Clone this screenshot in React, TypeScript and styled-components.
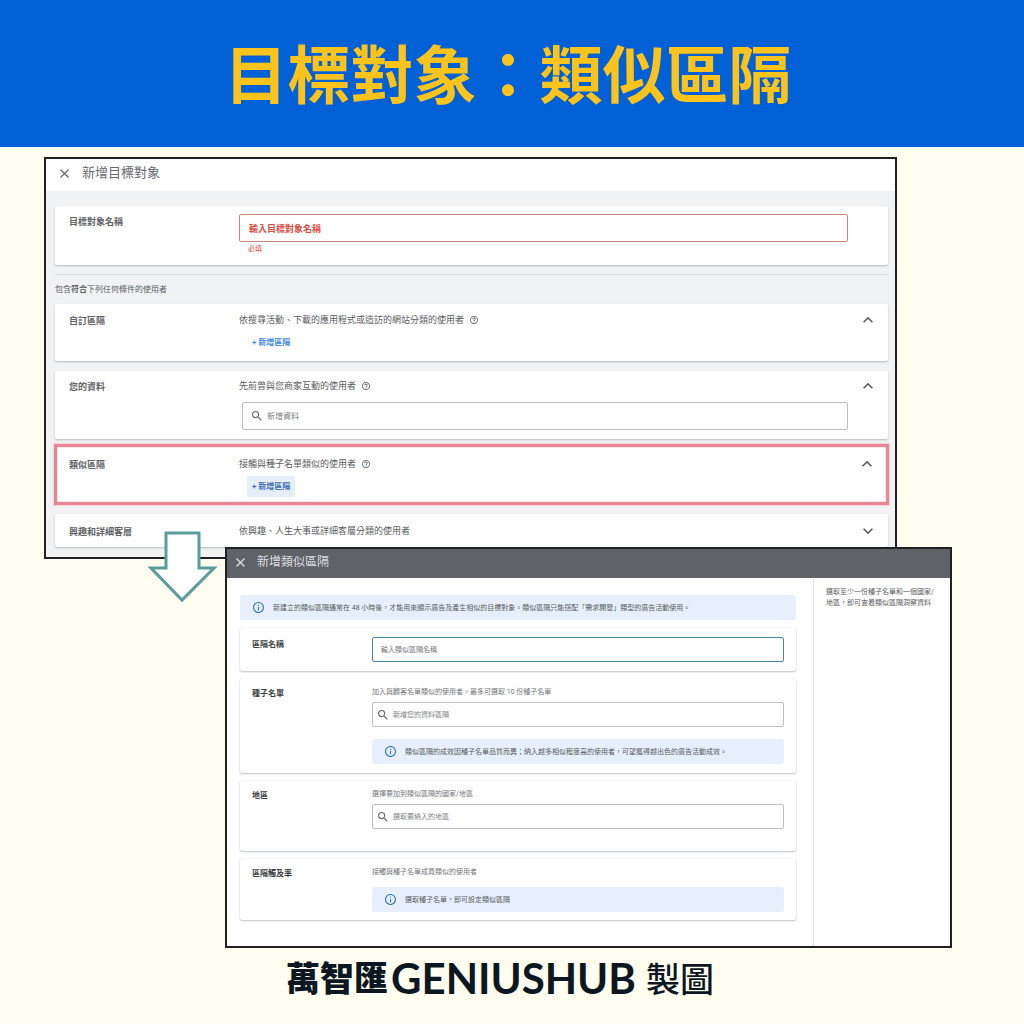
import React from "react";
import styled, { createGlobalStyle, css } from "styled-components";

const GlobalStyle = createGlobalStyle`
  *, *::before, *::after { box-sizing: border-box; }
  body {
    margin: 0;
    background: #fffdf0;
    color: #5a5d61;
    font-family: Roboto, "Noto Sans CJK TC", sans-serif;
  }
  h1, h2, h3, p { margin: 0; }
  button, input { font-family: inherit; }
`;

const Page = styled.main`
  display: flex;
  flex-direction: column;
`;

const Banner = styled.header`
  display: flex;
  justify-content: center;
  padding: 33px 8px 39px 0;
  margin-bottom: 10px;
  background: #0060d6;
`;

const BannerTitle = styled.h1`
  font-family: "Noto Sans CJK TC", sans-serif;
  font-size: 63px;
  line-height: 75px;
  font-weight: 700;
  color: #fbc31c;
`;

const Stage = styled.div`
  position: relative;
  display: flex;
  flex-direction: column;
`;

const Panel = styled.section`
  border: 2px solid #1f2224;
  background: #fff;
`;

const AudiencePanel = styled(Panel)`
  margin: 0 127px 0 44px;
`;

const SegmentPanel = styled(Panel)`
  position: relative;
  margin: -12px 72px 0 225px;
`;

const TitleBar = styled.div<{ $dark?: boolean }>`
  display: flex;
  align-items: center;
  gap: 13px;
  height: 32px;
  padding: 0 14px 4px;
  color: #66696d;
  ${(p) =>
    p.$dark &&
    css`
      gap: 12px;
      height: 29px;
      padding: 0 9px 3px;
      background: #5f6267;
      color: #dddee0;
    `}
`;

const PanelTitle = styled.h2<{ $size: number }>`
  font-size: ${(p) => p.$size}px;
  line-height: 20px;
  font-weight: 400;
`;

const IconButton = styled.button`
  display: flex;
  align-items: center;
  justify-content: center;
  height: 14px;
  padding: 0;
  border: 0;
  background: none;
  color: inherit;
`;

const AudienceBody = styled.div`
  display: flex;
  flex-direction: column;
  padding: 15px 7px 10px 9px;
  background: #f0f2f4;
`;

const Divider = styled.hr`
  width: 100%;
  height: 1px;
  margin: 9px 0 8px;
  border: 0;
  background: #dcdfe1;
`;

const Condition = styled.p`
  margin-bottom: 7px;
  font-size: 8px;
  line-height: 14px;
`;

const CardList = styled.div`
  display: flex;
  flex-direction: column;
  gap: 10px;
`;

const Card = styled.div<{ $top: number; $bottom: number; $highlight?: boolean }>`
  display: grid;
  grid-template-columns: 170px 1fr 40px;
  align-items: start;
  padding: ${(p) => p.$top}px 0 ${(p) => p.$bottom}px 14px;
  border-radius: 2px;
  background: #fff;
  box-shadow: 0 1px 2px rgba(60, 64, 67, 0.32);
  ${(p) =>
    p.$highlight &&
    css`
      margin: -5px -1px -1px;
      padding-left: 12px;
      grid-template-columns: 170px 1fr 38px;
      border: 3px solid #e58796;
      border-radius: 0;
      box-shadow: 0 0 0 1px #f7d3d8, inset 0 0 0 1px #fbe4e7;
    `}
`;

const SegmentCard = styled(Card)`
  grid-template-columns: 120px 1fr;
  padding-left: 12px;
  padding-right: 12px;
  box-shadow: 0 1px 2px rgba(60, 64, 67, 0.3), 0 0 1px rgba(60, 64, 67, 0.2);
`;

const labelText = css<{ $small?: boolean }>`
  padding-top: 1px;
  font-size: ${(p) => (p.$small ? 8 : 9)}px;
  line-height: 14px;
  font-weight: 700;
  color: ${(p) => (p.$small ? "#3c3f43" : "#5f6266")};
`;

const Label = styled.label<{ $small?: boolean }>`
  ${labelText}
`;

const CardHeading = styled.h3<{ $small?: boolean }>`
  ${labelText}
`;

const Field = styled.div`
  display: flex;
  flex-direction: column;
  align-items: stretch;
  min-width: 0;
`;

const Summary = styled.p`
  display: flex;
  align-items: center;
  gap: 6px;
  font-size: 9px;
  line-height: 14px;
`;

const Description = styled.p`
  font-size: 7px;
  line-height: 12px;
  color: #74777b;
`;

const ErrorText = styled.p`
  margin-top: 1px;
  padding-left: 9px;
  font-size: 7px;
  line-height: 12px;
  color: #d5453c;
`;

const NameInput = styled.input`
  width: 100%;
  height: 28px;
  padding: 2px 9px 0;
  border: 1px solid #d4827c;
  border-radius: 2px;
  outline: 0;
  background: #fff;
  font-size: 9px;
  font-weight: 700;
  &::placeholder { color: #db4d44; opacity: 1; }
`;

const SegmentNameInput = styled(NameInput)`
  height: 25px;
  padding: 1px 8px 0;
  border-color: #4388b0;
  font-size: 7px;
  font-weight: 400;
  &::placeholder { color: #74777b; }
`;

const SearchBox = styled.div<{ $compact?: boolean }>`
  display: flex;
  align-items: center;
  gap: 5px;
  height: ${(p) => (p.$compact ? 25 : 28)}px;
  margin: ${(p) => (p.$compact ? "4px 0 0" : "9px 0 0 3px")};
  padding: 0 ${(p) => (p.$compact ? 5 : 9)}px;
  border: 1px solid #bfc1c4;
  border-radius: 2px;
  color: #66696d;
`;

const SearchInput = styled.input<{ $compact?: boolean }>`
  flex: 1;
  min-width: 0;
  padding: 0;
  border: 0;
  outline: 0;
  background: none;
  font-size: ${(p) => (p.$compact ? 7 : 8)}px;
  &::placeholder { color: #7c7f83; opacity: 1; }
`;

const AddButton = styled.button<{ $active?: boolean }>`
  align-self: flex-start;
  height: 21px;
  margin: 5px 0 0 8px;
  padding: 0 5px;
  border: 0;
  border-radius: 2px;
  background: ${(p) => (p.$active ? "#e6eefb" : "transparent")};
  color: ${(p) => (p.$active ? "#406fb8" : "#4189e4")};
  font-size: 8px;
  font-weight: 700;
  line-height: 14px;
`;

const SegmentBody = styled.div`
  display: grid;
  grid-template-columns: 1fr 137px;
`;

const SegmentMain = styled.div`
  display: flex;
  flex-direction: column;
  gap: 8px;
  padding: 17px 17px 26px 13px;
`;

const Notice = styled.div<{ $gap?: number }>`
  display: flex;
  align-items: center;
  gap: 9px;
  height: 25px;
  margin-top: ${(p) => p.$gap ?? 0}px;
  padding: 0 13px;
  border-radius: 3px;
  background: #e7effc;
  font-size: 7px;
  line-height: 12px;
  svg { color: #2f78b8; }
`;

const Sidebar = styled.aside`
  padding: 9px 12px;
  border-left: 1px solid #e3e5e7;
  font-size: 7px;
  line-height: 11px;
`;

const Arrow = styled.svg`
  position: absolute;
  left: 147px;
  top: 373px;
`;

const Credit = styled.footer`
  display: flex;
  justify-content: center;
  align-items: center;
  padding: 6px 24px 0 0;
  color: #0c1722;
  font-family: Lato, "Noto Sans CJK TC", sans-serif;
  font-size: 34px;
  line-height: 48px;
`;

const CreditBold = styled.strong`
  font-weight: 900;
`;

const CreditLatin = styled.strong`
  margin: 0 10px 0 3px;
  font-size: 42px;
  font-weight: 700;
`;

const CreditPlain = styled.span`
  font-family: "Noto Sans CJK TC Medium", "Noto Sans CJK TC", sans-serif;
  font-weight: 500;
`;

type IconProps = { size: number; box: string; d: string };

const Icon = ({ size, box, d }: IconProps) => (
  <svg width={size} height={size} viewBox={box} fill="currentColor" aria-hidden="true">
    <path d={d} />
  </svg>
);

const CloseIcon = () => (
  <Icon
    size={9}
    box="5 5 14 14"
    d="M19 6.41 17.59 5 12 10.59 6.41 5 5 6.41 10.59 12 5 17.59 6.41 19 12 13.41 17.59 19 19 17.59 13.41 12z"
  />
);

const HelpIcon = () => (
  <Icon
    size={8}
    box="2 2 20 20"
    d="M11 18h2v-2h-2v2zm1-16C6.48 2 2 6.48 2 12s4.480 10 10 10 10-4.480 10-10S17.520 2 12 2zm0 18c-4.410 0-8-3.590-8-8s3.590-8 8-8 8 3.590 8 8-3.590 8-8 8zm0-14c-2.210 0-4 1.790-4 4h2c0-1.100.9-2 2-2s2 .9 2 2c0 2-3 1.750-3 5h2c0-2.250 3-2.500 3-5 0-2.210-1.790-4-4-4z"
  />
);

const InfoIcon = () => (
  <Icon
    size={11}
    box="2 2 20 20"
    d="M11 7h2v2h-2zm0 4h2v6h-2zm1-9C6.480 2 2 6.480 2 12s4.480 10 10 10 10-4.480 10-10S17.520 2 12 2zm0 18c-4.410 0-8-3.590-8-8s3.590-8 8-8 8 3.590 8 8-3.590 8-8 8z"
  />
);

const SearchIcon = () => (
  <Icon
    size={10}
    box="3 3 18 18"
    d="M15.500 14h-.79l-.28-.27A6.471 6.471 0 0 0 16 9.500 6.500 6.500 0 1 0 9.500 16c1.610 0 3.090-.59 4.230-1.570l.27.28v.79l5 4.990L20.490 19l-4.990-5zm-6 0C7.010 14 5 11.990 5 9.500S7.010 5 9.500 5 14 7.010 14 9.500 11.990 14 9.500 14z"
  />
);

const UpIcon = () => (
  <Icon size={10} box="6 6 12 12" d="M12 8l-6 6 1.410 1.410L12 10.830l4.590 4.580L18 14z" />
);

const DownIcon = () => (
  <Icon size={10} box="6 6 12 12" d="M16.590 8.590 12 13.170 7.410 8.590 6 10l6 6 6-6z" />
);

const Toggle = ({ open = true }: { open?: boolean }) => (
  <IconButton type="button" aria-expanded={open} aria-label={open ? "收合" : "展開"}>
    {open ? <UpIcon /> : <DownIcon />}
  </IconButton>
);

type SearchProps = { id: string; placeholder: string; compact?: boolean };

const Search = ({ id, placeholder, compact }: SearchProps) => (
  <SearchBox $compact={compact}>
    <SearchIcon />
    <SearchInput id={id} type="text" placeholder={placeholder} $compact={compact} />
  </SearchBox>
);

const AudienceForm = () => (
  <AudiencePanel>
    <TitleBar>
      <IconButton type="button" aria-label="關閉">
        <CloseIcon />
      </IconButton>
      <PanelTitle $size={13}>新增目標對象</PanelTitle>
    </TitleBar>
    <AudienceBody>
      <Card $top={8} $bottom={10}>
        <Label htmlFor="audience-name">目標對象名稱</Label>
        <Field>
          <NameInput id="audience-name" type="text" placeholder="輸入目標對象名稱" />
          <ErrorText>必填</ErrorText>
        </Field>
      </Card>
      <Divider />
      <Condition>
        包含<b>符合</b>下列任何條件的使用者
      </Condition>
      <CardList>
        <Card $top={9} $bottom={8}>
          <CardHeading>自訂區隔</CardHeading>
          <Field>
            <Summary>
              依搜尋活動、下載的應用程式或造訪的網站分類的使用者 <HelpIcon />
            </Summary>
            <AddButton type="button">+ 新增區隔</AddButton>
          </Field>
          <Toggle />
        </Card>
        <Card $top={8} $bottom={9}>
          <Label htmlFor="your-data">您的資料</Label>
          <Field>
            <Summary>
              先前曾與您商家互動的使用者 <HelpIcon />
            </Summary>
            <Search id="your-data" placeholder="新增資料" />
          </Field>
          <Toggle />
        </Card>
        <Card $top={10} $bottom={5} $highlight>
          <CardHeading>類似區隔</CardHeading>
          <Field>
            <Summary>
              接觸與種子名單類似的使用者 <HelpIcon />
            </Summary>
            <AddButton type="button" $active>
              + 新增區隔
            </AddButton>
          </Field>
          <Toggle />
        </Card>
        <Card $top={10} $bottom={8}>
          <CardHeading>興趣和詳細客層</CardHeading>
          <Summary>依興趣、人生大事或詳細客層分類的使用者</Summary>
          <Toggle open={false} />
        </Card>
      </CardList>
    </AudienceBody>
  </AudiencePanel>
);

const SegmentForm = () => (
  <SegmentPanel>
    <TitleBar $dark>
      <IconButton type="button" aria-label="關閉">
        <CloseIcon />
      </IconButton>
      <PanelTitle $size={12}>新增類似區隔</PanelTitle>
    </TitleBar>
    <SegmentBody>
      <SegmentMain>
        <Notice>
          <InfoIcon />
          新建立的類似區隔通常在 48 小時後，才能用來顯示廣告及產生相似的目標對象。類似區隔只能搭配「需求開發」類型的廣告活動使用。
        </Notice>
        <SegmentCard $top={9} $bottom={9}>
          <Label htmlFor="segment-name" $small>
            區隔名稱
          </Label>
          <SegmentNameInput id="segment-name" type="text" placeholder="輸入類似區隔名稱" />
        </SegmentCard>
        <SegmentCard $top={7} $bottom={9}>
          <Label htmlFor="seed-list" $small>
            種子名單
          </Label>
          <Field>
            <Description>加入與顧客名單類似的使用者。最多可選取 10 份種子名單</Description>
            <Search id="seed-list" placeholder="新增您的資料區隔" compact />
            <Notice $gap={12}>
              <InfoIcon />
              類似區隔的成效因種子名單品質而異；納入越多相似程度高的使用者，可望獲得越出色的廣告活動成效。
            </Notice>
          </Field>
        </SegmentCard>
        <SegmentCard $top={7} $bottom={22}>
          <Label htmlFor="region" $small>
            地區
          </Label>
          <Field>
            <Description>選擇要加到類似區隔的國家/地區</Description>
            <Search id="region" placeholder="選取要納入的地區" compact />
          </Field>
        </SegmentCard>
        <SegmentCard $top={7} $bottom={8}>
          <CardHeading $small>區隔觸及率</CardHeading>
          <Field>
            <Description>接觸與種子名單成員類似的使用者</Description>
            <Notice $gap={9}>
              <InfoIcon />
              選取種子名單，即可設定類似區隔
            </Notice>
          </Field>
        </SegmentCard>
      </SegmentMain>
      <Sidebar>選取至少一份種子名單和一個國家/地區，即可查看類似區隔洞察資料</Sidebar>
    </SegmentBody>
  </SegmentPanel>
);

const App = () => (
  <>
    <GlobalStyle />
    <Page>
      <Banner>
        <BannerTitle>目標對象：類似區隔</BannerTitle>
      </Banner>
      <Stage>
        <AudienceForm />
        <SegmentForm />
        <Arrow width="71" height="74" viewBox="0 0 71 74" aria-hidden="true">
          <path
            d="M19 3H52V38H67L35 70L4 38H19Z"
            fill="#fff"
            stroke="#5a9c9a"
            strokeWidth="3"
          />
        </Arrow>
      </Stage>
      <Credit>
        <CreditBold>萬智匯</CreditBold>
        <CreditLatin>GENIUSHUB</CreditLatin>
        <CreditPlain>製圖</CreditPlain>
      </Credit>
    </Page>
  </>
);

export default App;
